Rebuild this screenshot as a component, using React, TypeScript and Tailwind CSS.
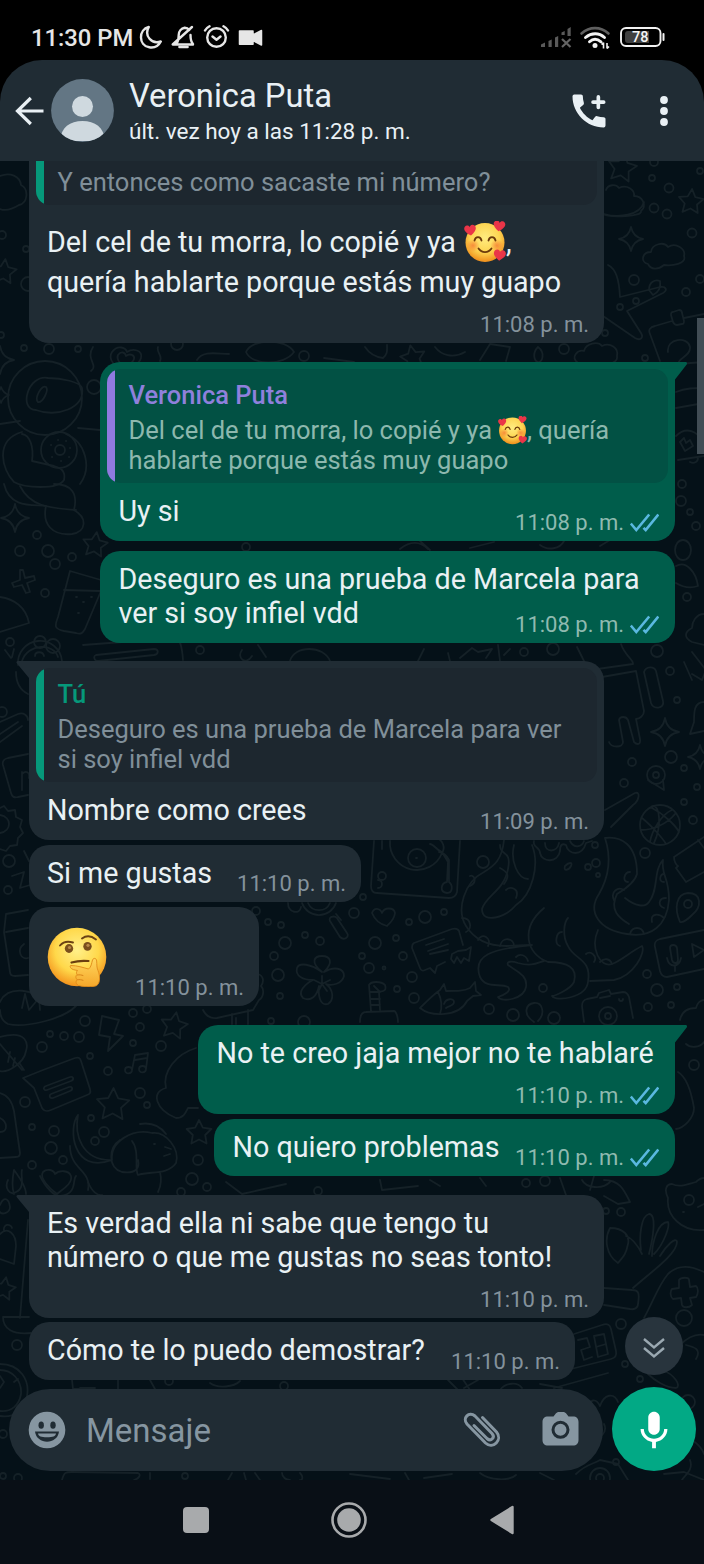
import React from 'react';
import clsx from 'clsx';
import { MdKeyboardVoice } from 'react-icons/md';

type Side = 'in' | 'out';

/* ---------- Wallpaper ---------- */

const DOTS: [number, number, number][] = [
  [654, 162, 4], [652, 178, 3], [700, 171, 3], [669, 188, 4.5], [654, 208, 4.5], [667, 214, 4.5], [692, 233, 4.5],
  [634, 280, 5], [686, 292, 4], [636, 301, 3], [620, 307, 3], [700, 279, 4], [605, 333, 3], [564, 349, 5], [645, 358, 3],
  [2, 235, 4], [26, 249, 3], [28, 284, 7], [1, 335, 3], [24, 348, 3], [49, 349, 5], [78, 349, 3], [177, 344, 6],
  [304, 356, 5], [94, 387, 7], [682, 484, 4], [681, 501, 5], [690, 512, 3], [696, 526, 4], [687, 597, 4], [524, 652, 4],
  [553, 649, 6], [657, 651, 6], [670, 671, 4], [677, 700, 3], [671, 757, 6], [632, 762, 4], [684, 768, 3], [656, 775, 9],
  [656, 775, 3], [37, 535, 4], [20, 551, 5], [48, 551, 6], [55, 564, 5], [72, 557, 4], [45, 593, 4], [10, 642, 4],
  [2, 712, 5], [246, 547, 4], [200, 650, 4], [53, 646, 7], [9, 861, 6], [8, 890, 4], [256, 911, 4], [268, 922, 3],
  [281, 925, 3], [285, 943, 6], [305, 935, 3], [320, 941, 4], [274, 956, 4], [278, 975, 6], [280, 996, 3], [85, 1021, 5],
  [133, 1013, 4], [147, 1009, 4], [140, 1027, 4], [50, 1034, 3], [64, 1036, 4], [79, 1037, 5], [42, 1047, 5],
  [133, 1043, 3], [161, 1046, 5], [90, 1056, 3], [108, 1071, 4], [140, 1093, 5], [147, 1105, 3], [25, 1102, 5],
  [91, 1118, 3], [104, 1132, 5], [32, 1127, 3], [54, 1131, 5], [95, 1141, 4], [51, 1148, 6], [63, 1160, 4],
  [32, 1165, 4], [198, 1160, 5], [192, 1179, 6], [304, 1022, 6], [271, 1021, 3], [483, 862, 6], [382, 876, 4],
  [363, 897, 3], [354, 913, 5], [425, 917, 6], [444, 912, 3], [409, 922, 3], [375, 943, 6], [396, 938, 3],
  [403, 956, 4], [362, 956, 3], [369, 968, 5], [384, 968, 1.5], [412, 977, 5], [397, 989, 3], [414, 998, 5],
  [489, 1009, 5], [513, 1015, 6], [554, 1018, 6], [543, 988, 4], [645, 853, 5], [647, 974, 4], [657, 990, 6],
  [677, 987, 3], [648, 1007, 4], [671, 1005, 3], [694, 1065, 5], [596, 863, 4], [588, 867, 3], [595, 845, 3],
  [598, 875, 2], [684, 802, 3], [693, 820, 4], [624, 783, 4], [697, 787, 3], [526, 1183, 4], [545, 1181, 5],
  [181, 1192, 4], [207, 1187, 4], [318, 1191, 4], [606, 1211, 3], [621, 1212, 4], [17, 1345, 5], [621, 1324, 5],
  [625, 1364, 3], [640, 1379, 3], [684, 1318, 8], [3, 1434, 4], [3, 1476, 3], [18, 1478, 4], [185, 1476, 3],
  [284, 1386, 4], [169, 1381, 4], [688, 1402, 7], [616, 1462, 3], [600, 1478, 10], [600, 1478, 4],
];

const STARS: [number, number, number, number][] = [
  [622, 168, 15, 10], [691, 202, 13, 5], [413, 358, 13, -12], [95, 545, 13, 8], [174, 1026, 14, 10],
  [113, 1105, 17, 2], [199, 1133, 13, 0], [4, 272, 13, 6], [4, 1289, 12, 10],
];

const SPARKS: [number, number, number][] = [
  [631, 239, 12], [15, 518, 14], [665, 732, 14], [0, 360, 14], [700, 757, 12], [1, 395, 8],
];

const DOODLES: string[] = [
  // clouds
  'M0 176c10-4 20 0 21 9 8 4 7 18-2 20-8 5-14 6-19 4',
  'M606 190c2-6 10-6 13-2 8-4 16 2 15 8 9 0 13 10 7 15 2 6-30 6-36 4',
  'M648 264c-8-2-6-12 3-12 1-8 13-11 17-5 8-5 18 2 16 9 3 8-12 10-20 9-6 5-13 5-16-1z',
  'M578 363c-8-6 0-14 6-12 2-8 14-10 18-5 8-4 17 2 15 10 1 5-5 8-8 7',
  'M604 214c14 4 36 2 40-12',
  // bird and drop near the calendar
  'M608 265c8 4 11 14 12 32l40-10c6-1 8 3 3 6l-36 18 14 22c3 5-1 8-6 5l-32-22',
  'M649 290c0-8 6-11 11-9 1 6-1 11-7 14z M538 347c8 6 4 16 0 15-4-1-6-9 0-15z',
  // calendar page
  'M672 321l-17 5c-5 1-7 4-5 8l10 27 M704 314l-20 4 M673 312l6-2c2 0 3 1 3 3l2 8c0 2 0 3-2 3l-5 1c-2 0-3-1-4-3l-2-7c0-2 0-3 2-3z',
  'M668 352c-2-14 20-16 22-5 1 9-12 11-12 17l26-2',
  // spaceman
  'M8 398a37 37 0 1 0 74 0a37 37 0 1 0-74 0z M36 410c-18 0-8-36 12-32 14 0 32 4 34 10 4 20-26 30-46 22z',
  'M38 402c-4-4 4-18 8-15 3 3-3 16-8 15z',
  'M41 450a18 18 0 1 0 36 0a18 18 0 1 0-36 0z M55 450a5 5 0 1 0 10 0a5 5 0 1 0-10 0z',
  'M51 445h.1M58 440h.1M66 441h.1M70 448h.1M69 457h.1M61 461h.1M52 457h.1',
  'M22 432C-6 440 2 470 14 482c10 6 44 8 50-2 2-10-4-12-10-14l-22-5c2-14-2-26-10-27',
  'M0 424l20-3 M78 428l22 2 M66 434c20 8 26 34 14 50 M20 486c10 20 28 22 56 24',
  'M4 484c6 26 32 20 42 22-4 18 6 30 26 28 14-2 16-16 2-24 4-16-2-26-20-26',
  // planet, hearts
  'M93 347c-8 12 6 18-2 24 M112 352c6-8 14-4 15 0 6-4 16-2 14 6-2 8-12 10-16 14-10-6-18-12-13-20z M118 355c3-4 7-3 8 1 4-3 9-1 8 3-1 4-6 6-9 8-5-3-9-8-7-12z',
  'M246 352c6-14 40-14 48 0-10 14-42 14-48 0z M158 347c-2 6 5 8 2 14 M197 360c6-10 20-6 32-6',
  'M365 347c4 6 10 10 18 11 5-4 4-8 4-13 M435 347c6 8 18 12 30 5 M480 360l10-16 20 3-4 14 M324 358l30 4',
  // left column
  'M70 571l-12 46c-4 10-3 12 6 14l12 2c6 2 7-1 9-4l16-38 M64 590l36 1 M70 571l31 9 M0 597c14 2 26 10 29 26l-29 9',
  'M76 597h1M91 597h1M83 602h1M78 613h1',
  'M18 665a22 22 0 1 1 44-4 M22 661c6-18 32-18 36-4 M34 642a6 6 0 1 0 12 0a6 6 0 1 0-12 0z M35 656c0-5 8-5 9 0 M16 672c0 10 4 18 12 22',
  'M83 645l92-7c5 0 7 8 8 22 M96 655l58-6c5 0 5 5 0 6l-56 6c-4 0-5-5-2-6z M242 650c-6 8 4 16 10 6 M290 661c4-16 34-16 40 0 M258 645l8 12 M18 722l-18 12 M22 726l-22 16 M0 722l18-8c6-2 10 2 10 6',
  'M28 754l-20 4c-4 1-6 3-5 7l8 28c1 4 3 5 7 4l10-2 M22 772v18 M22 774c4-4 8-2 7 4',
  'M0 808l4-2 4 5 7-1 1 7 6 3-2 7 3 6-5 5-1 7-7 1-4 5-6-2 M0 815c12 2 12 16 0 18',
  // carton, croissant, leaf
  'M28 910l-22 4-2 18 6 40c0 3 2 4 5 4l13-1 M6 932l22-4 M24 944c-8 6-3 16 4 14 M24 851l5 10 M12 876l12-4-4 16 10-3',
  'M0 1002c8-18 36-12 46 0 14 4 24 0 30 4-14 14-52 22-68 18-6-3-8-8-8-14 M22 1008l3-14 4 16 10-12 1 12',
  'M0 1037c28-8 28 8 26 14-2 12-18 22-26 20 M0 1044l22 26 M8 1062l2-10 M15 1058l-2 8 M20 1064l4 6',
  'M23 1078l20-8 32-12c4-1 5 0 6 3l9 28c1 4 0 5-3 6l-36 15c-5 2-7 1-9-2l-8-20z M46 1086l24-9c4-1 4 3 1 4l-24 9c-4 1-4-3-1-4z M51 1094l18-7c4-1 4 3 1 4l-17 7c-4 1-4-3-2-4z',
  'M0 1093c8 2 12 8 14 18l6 42c0 3-2 4-4 4l-16 1 M0 1118c8 4 8 14 0 14',
  // bolt, notes
  'M102 1016l17 4-5 14 9 2-15 15 2-14-11-2z M135 1055l13-2-2 16 M135 1055l-3 15 M135 1060l12-2 M125 1070c0-4 7-4 7 0s-7 5-7 0z M139 1069c0-4 7-4 7 0s-7 5-7 0z',
  // puppy, heart
  'M78 1115c-10 12-6 60 34 45 M78 1115c-4 20 4 46 34 45 M88 1190c4-20-18-20-18-44 M112 1160c-2-18 20-32 40-27 14-2 28 16 24 30-8 12-26 8-38 12-4-6 2-24-6-34 M120 1140c-12 8-12 28 2 32 14 2 18-4 16-12 M154 1144h1 M165 1147l6 2 M164 1156l6-2 M160 1172c2 8 0 16-2 20 M140 1124c12-2 20 2 26 10',
  'M43 1172c4-4 11-2 12 2 4-4 14-4 16 2 2 8-10 14-14 18-8-6-18-16-14-22z M14 1170c6 8 12 18 12 24 M14 1170c-2 10-2 18 0 24',
  'M196 1048c-20 6-34 24-30 40-16 4-10 22 10 30 8 0 10-6 12-10l10 0',
  // hibiscus, magnifier
  'M322 972c-12-10-8-16 0-16 8 0 12 6 2 16 10-6 20-4 20 4-2 8-12 10-18 8 8 6 8 16 2 20-8 2-10-8-9-18-2 10-8 16-16 12-6-6 2-14 10-18-10 0-18-4-16-12 2-6 14-4 25 4z M322 984l-8-4 M322 984l8-4 M322 984l-4 8 M322 984l5 7 M322 984v-8',
  'M302 903a18 18 0 0 0 34 0 M308 903a12 12 0 0 0 22 0 M336 914l5 6 M330 921l10 16c4 4 10 0 7-4l-10-15c-3-3-9-1-7 3z M288 903c0 10 12 12 13 4',
  'M258 974c6 2 6 8 3 12 4 4 2 12-2 14l-6 10-36 8c-8 1-12-4-14-8 M232 1014v10 M248 1010v14 M236 1018v6',
  // turntable
  'M374 841l-3 45c0 4 2 7 6 7l72 5c5 0 7-2 8-6l3-51 M390 841a27 27 0 0 0 52 12c4-6 0-12-3-14 M408 858a9 9 0 1 0 18 0a9 9 0 1 0-18 0z M416 858h1 M430 844c4 0 6 6 12 8l6 10-1 20c-6 1-8 10 0 11 6 0 6-8 2-11v-22c-2-4-6-8-10-8 M378 888a4 4 0 1 0 0-8 M382 841v8',
  'M372 913c2-6 8-5 10 0 2-6 12-6 13 0-1 8-6 10-8 13-8-2-13-8-15-13z',
  'M414 943l38-14c4-1 6 0 7 2l4 14 M414 943c-2 1-2 3-2 5l8 20c1 3 3 3 5 2l5-2 5 5 2-7 8-4 M426 945l18-6 M428 951l20-7 M430 954l18-4 M452 954l6-3 8-1 5-3-2 14-5-3-3 5-4-6-3 6-3-4z',
  // octopus
  'M504 840c-2 20-10 26-20 32-20 10-28 38-18 54 10 16 26 20 40 20l24-1',
  'M532 845c8 20 0 50-16 60-10 12-34 20-34 4 4-14 22-18 26-40 4-20-8-12-8-24 M514 845c-4 16 4 34 14 34',
  'M544 908c-24 20-18 46 4 54 20 0 30 6 26 20-4 8-20 14-22 14 4 6 34 2 36-14 4-24-14-22-20-36-6-10-4-24 0-28',
  'M532 945c-40 4-60 10-52 32 6 12 20 6 28 10 4 4-4 8-10 10 4 6 26 2 28-10 2-12-10-16-18-22-2-4 4-4 10-2 16 4 20-1 26-2',
  'M605 838c16-2 32 6 32 36-2 8-10 14-20 20-8 16 2 24 12 30 M605 838c8 24 2 42-6 56-12 18 0 36 28 40 24 4 40-8 42-34 0-24-8-24-6-40-10 10-4 30-14 42-4 6-14 4-24-4',
  'M598 930c-8 18 2 38 14 34 10-4 18-12 30-18 4 6-8 30-28 34l-24 1 M605 810l30-17c6-2 4 8-2 12l-22 22',
  'M470 886c8-4 4-12 0-10 M462 918c10 0 10 12 4 14 M478 940c4-8 14-2 10 6 M500 946c2-10 14-8 14 0 M506 890c4-4 14-2 10 8 M500 868c8 4 10 8 4 16 M560 946c-6-2-4-14 2-14 M594 962c4-6-4-12-8-8 M516 957c4-4 10-2 12 4 M630 934c2-8 12-8 14 0 M652 922c-2-10 8-8 12-4 M664 908c-6-2-6-10 2-10 M664 882c-6 0-4-8 0-8 M628 882c-6 0-4-10 2-10 M614 900c-4-8 4-14 10-10 M600 962c4-4 10-4 12 2',
  // goggles
  'M534 841c-2 6 6 6 6 12 2 10 18 10 20-2 0-6 2-8 6-6 2 10 16 12 20-2l6-2 M545 843c0 10 12 10 14 0 M570 841c4 8 12 6 14 0 M565 866c4-4 8-4 6 0-2 4-8 6-6 0z',
  // basketball
  'M640 825a20 20 0 1 0 40 0a20 20 0 1 0-40 0z M642 818c10 8 22 22 24 26 M652 808c12 6 24 18 27 24 M650 842c2-12 12-28 22-32 M641 830c12 0 26-6 34-16 M652 806c8-2 10 20 2 37',
  'M704 837l-30 20c0 4 2 8 4 9l-2 2 10 14 18-10 M698 840l6 8 M648 780l16 10-1-10',
  // pin, voice card
  'M680 922c-6-14-4-28 8-29 14 0 14 14 4 22-4 4-8 8-12 7z M684 904a4 4 0 1 0 8 0a4 4 0 1 0-8 0z',
  'M704 930l-44 9c-4 1-6 4-5 8l5 24c1 4 3 6 7 6l37-8 M670 948c0-4 6-4 7 0l1 12c0 4-5 4-6 0z M667 958c2 10 12 10 14 0 M675 966v5 M692 944l12 6-10 7z',
  // fish, candle
  'M420 1008c8-8 14-14 20-18l4-6 2 7c12 0 18 0 24-3l5-6 1 9 5 4-8 1-6 5c-8 16-36 16-47 7z M438 992c4 8 4 16 2 22 M444 1004c2-6 10-6 10-2s-6 4-8 6',
  'M369 985c2-4 12-4 16 0 2 6-2 6-6 7l1 18 M369 985l2 26 M370 992h10 M370 999h10 M371 1005h9 M360 1022c0-6 2-10 6-10l28-1c2 0 4 6 4 11 M374 986l6 6',
  'M534 1022c-12-8-8-18 0-19 8-1 12 10 4 18',
  // camera
  'M584 1022l-2-16c0-4 1-6 5-7l10-2 2-4 10-3 2 4 12-2c4 0 5 2 6 5l4 21 M599 1016a9 9 0 1 1 18 0a9 9 0 1 1-18 0 M605 1016a3 3 0 1 0 6 0a3 3 0 1 0-6 0z M600 998l10-2 M619 999a2 2 0 1 0 4 0',
  'M680 1020c2-10 10-12 16-12 2-8 8-8 8-8 M678 1072c10 6 14 24 16 36 0 10-10 20-18 21 M686 1044c4 4 14 4 18-2',
  // robot and cart
  'M577 647l6 12c2 3 2 4 0 12l50-7c1-4-8-8-12-20 M602 677l34-6 8 40c0 4-4 8-8 8l4 20c1 6-3 6-6 3l-6-22c-2-4-8-4-9 0l4 22c0 6-12 6-14 0 M644 672c2-6 10-6 12-1l7 30c2 8-10 9-12 2z',
  'M675 550a8 10 0 1 0 16 0a8 10 0 1 0-16 0z M676 566c10-6 20 6 22 20-6 2-14 2-22-3 M704 614c-8 0-12 8-12 14-8 4-8 10 0 14l12 3 M692 652l14 18-4 10-10-6 M684 662l8 18 M704 702c-10 0-10 10-10 20l-4 12 14-3',
  'M676 392c10-4 18-4 28-4 M676 408l28-5 M676 436c12-12 28-2 28 14 M680 442l4-4 2 5 4-3 3 6-8 5z M678 460l26-4 M690 462c4 2 8 0 8-4',
  // between the rows
  'M424 649l-6 12 M448 653l2 8 M460 658l12-10 6 4 14-3-6 9 M498 645l2 16 M510 649l-6 6 M5 650l6 8 M14 649l-2 8',
  'M420 541l10 9 M400 549c10-8 20-8 28 0 M540 545c8 6 20 4 24-4 M470 548l24-6 M600 546l10-6',
  'M380 1180l2 10 36-4 M430 1180l10 6 M480 1178l6 8 M560 1178l6 17 M582 1180c4 8 20 10 28 2 M590 1190l4-14 M604 1180c16 0 20 10 26 22 l-12 2-14-8',
  'M226 1182l16 12 44-10 M88 1182c4 10 10 14 14 13 M40 1176c6 12 14 20 20 20 18-2 12-16 16-20 M0 1205c4-10 9-6 10 2 0 6-8 8-10 5 M8 1180c-4 8 2 16 8 12 10-4 4-18 6-22',
  // bear, hand with petals
  'M668 1198c-4-8-2-14 4-14 8 4 16 0 24-2 4-4 8-4 8-4 M668 1198c-2 18 14 34 36 32 M684 1200a5 5 0 1 0 10 0a5 5 0 1 0-10 0z M698 1207l6-3 M683 1212h1',
  'M610 1228c14 0 20 8 18 16-2 10-4 12-10 19-12-8-14-24-8-35z M641 1250c-2-14 0-34 8-36 8 0 4 24 0 40 M652 1256c0-14 6-34 16-34 2 4-4 22-14 32 M660 1256c6-10 16-20 17-14 0 12-26 30-44 46 M604 1288l28 2c6 0 8 2 6 14 0 4-4 6-8 5l-26-4 M626 1236c6 2 12 10 16 18',
  // gamepad
  'M644 1318c10-18 14-32 24-44 10-10 24-8 36-2 M672 1289l7-1 0-8c2-3 10-3 10 0l1 7 6-1c3 2 2 9 0 11l-6 1 2 7c-3 3-9 3-10 0l-1-7-8 1c-3-2-3-8-1-10z M680 1345c6-6 14-12 24-10 M686 1345c8 2 16 4 10 14 M662 1370c12 4 20 16 14 18-10 0-22-8-28-14',
  // date counter
  'M574 1334l28-9c6-2 8 0 9 4l5 22c1 5-1 7-5 8l-40 10 M578 1340l9-2 3 9-9 3 3 10 8-3 M594 1336l10-2 4 20-10 3z M596 1347l10-3 M554 1388l54-15',
  // left bottom
  'M0 1234c8-8 16 0 16 12l-2 18-14-5 M4 1230a4 4 0 1 1 8-2 M28 1220l-8 98 M3 1317h26 M3 1317c0 12 10 18 28 16',
  'M0 1364c20 0 30 16 27 32-2 16-14 22-27 20 M0 1370c12 0 22 10 21 24-2 12-10 18-21 17 M0 1376l4 6-4 6 M14 1382l4-3',
  'M72 1380l1 9 22-1 M80 1388h14 M118 1380v9 M150 1380l5 9 M210 1383c8 6 24 4 30-2 M448 1380l10 10 M470 1390l-8-12 M478 1380l-14 8 M500 1390c6-8 18-8 22-2 M540 1384l22 4',
  'M62 1480c2-8 4-8 10-8l66 1c4 2 0 6-4 7 M150 1473v6 M232 1473l-4 7 M244 1473l2 7 M255 1473l5 7 M282 1473c0 4 4 7 8 7 M300 1473c4 4 2 8 0 7 M350 1474l40 5 M405 1473l4 7 M424 1478l28-4 M480 1473c10 8 30 8 36 2 M540 1473l14 7',
  'M586 1410c4-12 10-12 14-4 4-12 14-14 18-4 M590 1440c10 0 18-8 14-16 M576 1474c10-10 18-10 24-14 l18 4 10 16 M690 1460c4 10-6 16-8 20 M664 1474l20-2 20 8 M692 1440c6 4 10 8 12 14',
];

function starPoints(cx: number, cy: number, r: number, tilt: number) {
  return Array.from({ length: 10 }, (_, i) => {
    const a = ((i * 36 - 90 + tilt) * Math.PI) / 180;
    const d = i % 2 ? r * 0.5 : r;
    return `${(cx + d * Math.cos(a)).toFixed(1)},${(cy + d * Math.sin(a)).toFixed(1)}`;
  }).join(' ');
}

function Wallpaper() {
  return (
    <svg
      className="absolute inset-0 h-full w-full"
      viewBox="0 161 704 1319"
      fill="none"
      stroke="#152127"
      strokeWidth="1.8"
      strokeLinecap="round"
      strokeLinejoin="round"
      aria-hidden="true"
    >
      {DOODLES.map((d) => (
        <path key={d} d={d} />
      ))}
      {DOTS.map(([x, y, r], i) => (
        <circle key={i} cx={x} cy={y} r={r} />
      ))}
      {STARS.map(([x, y, r, tilt], i) => (
        <polygon key={i} points={starPoints(x, y, r, tilt)} />
      ))}
      {SPARKS.map(([x, y, r], i) => (
        <path
          key={i}
          d={`M${x} ${y - r}q2 ${r - 2} ${r} ${r}q${2 - r} 2 ${-r} ${r}q-2 ${2 - r} ${-r} ${-r}q${r - 2} -2 ${r} ${-r}z`}
        />
      ))}
      <path d="M20 570l3 0 2 8 9-2 1 4-8 3 3 9-4 1-4-8-8 2-2-4 8-3z" />
    </svg>
  );
}

/* ---------- Emoji ---------- */

const HEART = 'M0 3.2C-3.6.6-5.2-1.2-5.2-3.2c0-2 1.5-3 2.8-3C-1.2-6.2-.3-5.4 0-4.4c.3-1 1.2-1.8 2.4-1.8 1.3 0 2.8 1 2.8 3C5.2-1.2 3.6.6 0 3.2z';

function HeartsFace({ className }: { className?: string }) {
  return (
    <svg viewBox="0 0 42 42" className={className} role="img" aria-label="🥰">
      <defs>
        <radialGradient id="hf-skin" cx="50%" cy="38%" r="60%">
          <stop offset="0" stopColor="#ffec80" />
          <stop offset="0.62" stopColor="#fdd552" />
          <stop offset="1" stopColor="#f0931f" />
        </radialGradient>
        <radialGradient id="hf-blush">
          <stop offset="0" stopColor="#f57a33" stopOpacity="0.8" />
          <stop offset="1" stopColor="#f57a33" stopOpacity="0" />
        </radialGradient>
      </defs>
      <circle cx="21" cy="21.5" r="19.5" fill="url(#hf-skin)" />
      <circle cx="9" cy="24.5" r="6.5" fill="url(#hf-blush)" />
      <circle cx="33" cy="24.5" r="6.5" fill="url(#hf-blush)" />
      <path
        d="M10.5 19.5c1-4.5 6-4.5 7 0M24.5 19.5c1-4.5 6-4.5 7 0M14.5 27.5c3.2 4.7 9.8 4.7 13 0"
        fill="none"
        stroke="#6b3a0c"
        strokeWidth="1.8"
        strokeLinecap="round"
      />
      <path d={HEART} fill="#ea3548" transform="translate(6.5 11) rotate(-8) scale(1.12)" />
      <path d={HEART} fill="#ea3548" transform="translate(35 6.8) rotate(8) scale(1.12)" />
      <path d={HEART} fill="#ea3548" transform="translate(35.5 36) rotate(6) scale(1.15)" />
    </svg>
  );
}

function ThinkingFace({ className }: { className?: string }) {
  return (
    <svg viewBox="0 0 60 60" className={className} role="img" aria-label="🤔">
      <defs>
        <radialGradient id="tf-skin" cx="50%" cy="38%" r="62%">
          <stop offset="0" stopColor="#fff08a" />
          <stop offset="0.6" stopColor="#ffd84a" />
          <stop offset="1" stopColor="#f3921c" />
        </radialGradient>
        <linearGradient id="tf-hand" x1="0" y1="0" x2="0" y2="1">
          <stop offset="0" stopColor="#ffd75e" />
          <stop offset="1" stopColor="#f5a72a" />
        </linearGradient>
      </defs>
      <circle cx="30" cy="30" r="29.3" fill="url(#tf-skin)" />
      <ellipse cx="22" cy="21.5" rx="4.2" ry="4.4" fill="#7a4f1c" />
      <ellipse cx="40.5" cy="19.3" rx="4.2" ry="4.4" fill="#7a4f1c" />
      <circle cx="22.5" cy="20.5" r="1.6" fill="#b98a4a" />
      <circle cx="41" cy="18.3" r="1.6" fill="#b98a4a" />
      <path d="M13 18.5c3-3.5 8-4.5 13-3M35 11.5c4-3 9-3 14 1" fill="none" stroke="#6b4214" strokeWidth="1.9" strokeLinecap="round" />
      <path d="M24.5 35.5c5-1.5 11-2 17-1.5" fill="none" stroke="#6b3f10" strokeWidth="2.2" strokeLinecap="round" />
      <path
        d="M24 38.5c6 0 12 2 17.5 3.5 3-2 3-6 4-9 1-2.5 4-2 4.2 1 .3 4-.2 6 1.3 9.5 2.5 6 2.5 15-3.5 15.8-5 .7-12 .5-16-.8-4-2.500-2-5-1.5-6-2-2-1-4 0-5-1-1.5-.5-3 .5-4-3-.5-6-1-7-3-.5-1.500-.5-2 .5-2z"
        fill="url(#tf-hand)"
        stroke="#e08a18"
        strokeWidth="0.9"
      />
      <path d="M30.5 48c2-.5 4 0 5.5.5M30.5 52.8c2-.5 4 0 5.5.5" fill="none" stroke="#d98518" strokeWidth="1" strokeLinecap="round" />
    </svg>
  );
}

/* ---------- Status bar ---------- */

function StatusBar() {
  return (
    <div className="flex h-[60px] items-center bg-black pl-[31px] pr-[38px] pt-[15px] text-[#e6e6e6]">
      <span className="w-[103px] whitespace-nowrap text-[23.8px] font-medium leading-7">11:30 PM</span>
      <svg
        className="-mt-[2px] ml-[4px] h-6 w-[126px]"
        viewBox="138 25 126 24"
        fill="none"
        stroke="currentColor"
        strokeWidth="2.4"
        strokeLinecap="round"
        strokeLinejoin="round"
      >
        {/* moon */}
        <path d="M148.8 27c-10.5 2.5-10.5 18.5.5 20.3 5 .8 9.2-1.3 11.5-5.8-9 3.2-17-5.5-12-14.5z" />
        {/* muted bell */}
        <path d="M174 44.5h19M176.5 43.5c2-2 2-4.5 2.2-8.5 0-3.5 2.5-6.5 6-7.2 2 .2 3.5 1 4.5 2.2M190.5 35c0 4.5.5 7 2.5 9M192 27l-19.3 17.5" />
        <path d="M179.5 47h8" strokeWidth="2.6" />
        {/* alarm */}
        <circle cx="216.5" cy="37.5" r="9.3" />
        <path d="M212.5 36.5l4 3.2 4-3.2M205 30.5c1-2 2.5-3.2 4.5-4.2M228 30.5c-1-2-2.5-3.2-4.5-4.2" />
        {/* video camera */}
        <path d="M239.500 31h13.5v3.8l8.5-4.3v14.5l-8.5-4.3v3.6h-13.5z" fill="currentColor" strokeWidth="1.5" />
      </svg>
      <svg className="-mt-[1px] ml-auto h-6 w-[126px]" viewBox="540 25 126 24" fill="none">
        <path
          d="M541 47v-2.5l4-2V47zM548.5 47v-6l3.2-1.5V47zM555 47V37.5l3.2-1.5V47zM561.5 35v-2.5l3.2-1.5v4zM567.5 36v-7l3.2-2v9z"
          fill="#5a5a5a"
        />
        <path d="M562 39l8.5 8M570.5 39l-8.5 8" stroke="#646464" strokeWidth="2.2" />
        <path d="M581.5 33.5c8-7.2 19-7.2 27 0" stroke="#5f5f5f" strokeWidth="2.6" strokeLinecap="round" />
        <path d="M585.5 37.5c6-5 13.5-5 19 0M589.5 41.8c3.5-3.2 7.5-3.2 11.5 0" stroke="#f2f2f2" strokeWidth="2.9" strokeLinecap="round" />
        <circle cx="595" cy="45.5" r="2.5" fill="#f2f2f2" />
        <path d="M603.5 42.5v6M607 43v5.5M603.5 42.5l-2 2M607 48.5l2-2" stroke="#f2f2f2" strokeWidth="1.6" />
        <rect x="621" y="28" width="39.5" height="18" rx="5" stroke="#f2f2f2" strokeWidth="1.9" />
        <path d="M625 34a3 3 0 0 1 3-3h21v12h-21a3 3 0 0 1-3-3z" fill="#3f3f3f" />
        <path d="M663.5 34v6" stroke="#f2f2f2" strokeWidth="2" strokeLinecap="round" />
        <text x="640.2" y="42.3" textAnchor="middle" fill="#f5f5f5" fontSize="14.5" fontWeight="500">78</text>
      </svg>
    </div>
  );
}

/* ---------- Header ---------- */

function ChatHeader() {
  return (
    <header className="flex h-[101px] items-center rounded-t-[42px] bg-[#202c34] pl-[14px] text-[#e9f0f4]">
      <svg className="h-[30px] w-[31px]" viewBox="0 0 31 30" fill="none" stroke="currentColor" strokeWidth="3.2" aria-label="Atrás">
        <path d="M29.5 15H4M16.8 2 3.5 15l13.3 13" />
      </svg>
      <svg className="ml-[6px] size-[63px]" viewBox="0 0 63 63">
        <defs>
          <clipPath id="avatar">
            <circle cx="31.5" cy="31.5" r="31.4" />
          </clipPath>
        </defs>
        <g clipPath="url(#avatar)">
          <path d="M0 0h63v63H0z" fill="#637684" />
          <circle cx="31.5" cy="27.5" r="10.5" fill="#cfd9df" />
          <path d="M9 62c1-14 10-20 22.5-20S53 48 54 62z" fill="#cfd9df" />
        </g>
      </svg>
      <div className="ml-[15px] mt-[2px] flex flex-col gap-[3px]">
        <h1 className="text-[32.7px] leading-[36px]">Veronica Puta</h1>
        <p className="text-[22.5px] leading-[28px]">últ. vez hoy a las 11:28 p. m.</p>
      </div>
      <svg className="ml-auto size-[44px]" viewBox="0 0 24 24" aria-label="Llamar">
        <path
          fill="currentColor"
          d="M20.01 15.38c-1.23 0-2.42-.2-3.53-.56-.35-.12-.74-.03-1.01.24l-1.57 1.97c-2.83-1.35-5.48-3.9-6.89-6.83l1.95-1.66c.27-.28.35-.67.24-1.02-.37-1.11-.56-2.3-.56-3.53 0-.54-.45-.99-.99-.99H4.19C3.65 3 3 3.24 3 3.99 3 13.28 10.73 21 20.01 21c.71 0 .99-.63.99-1.18v-3.45c0-.54-.45-.99-.99-.99z"
        />
        <path d="M17.1 4.3v5.8M14.2 7.2H20" stroke="currentColor" strokeWidth="2" strokeLinecap="round" />
      </svg>
      <svg className="ml-[45px] mr-[32px] h-[32px] w-[16px]" viewBox="0 0 16 32" fill="currentColor" aria-label="Más">
        <circle cx="8" cy="5" r="3.9" />
        <circle cx="8" cy="16" r="3.9" />
        <circle cx="8" cy="27" r="3.9" />
      </svg>
    </header>
  );
}

/* ---------- Messages ---------- */

function ReadTicks() {
  return (
    <svg className="ml-[6px] h-[20px] w-[29px]" viewBox="0 0 29 20" fill="none" stroke="#5ab8e0" strokeWidth="2.6">
      <path d="M.8 10.5 6.3 17 19.2 1.5M13.5 14.8l2.2 2.2L28.3 1.5" />
    </svg>
  );
}

function Tail({ side }: { side: Side }) {
  return side === 'in' ? (
    <svg className="absolute -left-[13px] top-0 h-[19px] w-[14px]" viewBox="0 0 14 19" fill="#202c34">
      <path d="M14 0H2C.3 0 0 1.5 1 2.6L13 17v2h1z" />
    </svg>
  ) : (
    <svg className="absolute -right-[12px] top-0 h-[20px] w-[13px]" viewBox="0 0 13 20" fill="#005d4b">
      <path d="M0 0h11.5c1.5 0 2 1.5 1 2.8L1 17.5V20H0z" />
    </svg>
  );
}

interface QuoteProps {
  side: Side;
  title?: string;
  clipped?: boolean;
  children: React.ReactNode;
}

function Quote({ side, title, clipped, children }: QuoteProps) {
  return (
    <div
      className={clsx(
        'mx-[7px] flex overflow-hidden',
        side === 'in' ? 'bg-[#1d272f] text-[#808f99]' : 'bg-[#025144] text-[#8db8ae]',
        clipped ? 'h-[44px] rounded-b-[14px]' : 'mt-[7px] h-[114px] rounded-[14px]'
      )}
    >
      <div className={clsx('w-[8px] shrink-0', side === 'in' ? 'bg-[#06987a]' : 'bg-[#8f7ae0]')} />
      <div className={clsx('whitespace-nowrap pl-[13.5px] text-[25.5px] leading-[30px]', clipped ? 'pt-[6px]' : 'pt-[11px]')}>
        {title && (
          <div className={clsx('mb-[5px] font-medium', side === 'in' ? 'text-[#06987a]' : 'text-[#8f80dc]')}>{title}</div>
        )}
        {children}
      </div>
    </div>
  );
}

interface BubbleProps {
  side: Side;
  time: string;
  className: string;
  tail?: boolean;
  quote?: React.ReactNode;
  children: React.ReactNode;
}

function Bubble({ side, time, className, tail, quote, children }: BubbleProps) {
  return (
    <div
      className={clsx(
        'relative flex shrink-0 flex-col rounded-[20px]',
        side === 'in' ? 'ml-[29px] self-start bg-[#202c34]' : 'mr-[29px] self-end bg-[#005d4b]',
        tail && (side === 'in' ? 'rounded-tl-none' : 'rounded-tr-none'),
        className
      )}
    >
      {tail && <Tail side={side} />}
      {quote}
      {/* text and time share one grid cell so the time can sit beside the last line */}
      <div className={clsx('grid flex-1 pb-[6px]', side === 'in' ? 'pl-[18px] pr-[15px]' : 'pl-[18.5px] pr-[16px]')}>
        <div className="col-start-1 row-start-1 whitespace-nowrap pt-[10.5px] text-[28.7px] leading-[34px] text-[#e9f1f4]">
          {children}
        </div>
        <div
          className={clsx(
            'col-start-1 row-start-1 flex items-center self-end justify-self-end text-[22px] leading-6',
            side === 'in' ? 'text-[#84929c]' : 'text-[#8fbab0]'
          )}
        >
          {time}
          {side === 'out' && <ReadTicks />}
        </div>
      </div>
    </div>
  );
}

function Messages() {
  return (
    <div className="relative flex flex-col">
      <Bubble
        side="in"
        time="11:08 p. m."
        className="h-[182px] w-[575px] rounded-t-none"
        quote={
          <Quote side="in" clipped>
            Y entonces como sacaste mi número?
          </Quote>
        }
      >
        <div className="mt-[5.5px] flex h-[41px] items-center">
          Del cel de tu morra, lo copié y ya
          <HeartsFace className="ml-[8px] size-[42px]" />,
        </div>
        <div className="leading-[41px]">quería hablarte porque estás muy guapo</div>
      </Bubble>

      <Bubble
        side="out"
        time="11:08 p. m."
        tail
        className="mt-[19px] h-[179px] w-[575px]"
        quote={
          <Quote side="out" title="Veronica Puta">
            <div className="flex h-[30px] items-center">
              Del cel de tu morra, lo copié y ya
              <HeartsFace className="ml-[6px] size-[29px]" />, quería
            </div>
            <div>hablarte porque estás muy guapo</div>
          </Quote>
        }
      >
        Uy si
      </Bubble>

      <Bubble side="out" time="11:08 p. m." className="mt-[10px] h-[92px] w-[575px]">
        Deseguro es una prueba de Marcela para
        <br />
        ver si soy infiel vdd
      </Bubble>

      <Bubble
        side="in"
        time="11:09 p. m."
        tail
        className="mt-[18px] h-[179px] w-[575px]"
        quote={
          <Quote side="in" title="Tú">
            Deseguro es una prueba de Marcela para ver
            <br />
            si soy infiel vdd
          </Quote>
        }
      >
        Nombre como crees
      </Bubble>

      <Bubble side="in" time="11:10 p. m." className="mt-[5px] h-[57px] w-[332px]">
        Si me gustas
      </Bubble>

      <Bubble side="in" time="11:10 p. m." className="mt-[5px] h-[99px] w-[230px]">
        <ThinkingFace className="mt-[9px] size-[60px]" />
      </Bubble>

      <Bubble side="out" time="11:10 p. m." tail className="mt-[19px] h-[89px] w-[477px]">
        No te creo jaja mejor no te hablaré
      </Bubble>

      <Bubble side="out" time="11:10 p. m." className="mt-[5px] h-[57px] w-[461px]">
        No quiero problemas
      </Bubble>

      <Bubble side="in" time="11:10 p. m." tail className="mt-[19px] h-[123px] w-[575px]">
        Es verdad ella ni sabe que tengo tu
        <br />
        número o que me gustas no seas tonto!
      </Bubble>

      <Bubble side="in" time="11:10 p. m." className="mt-[4px] h-[58px] w-[546px]">
        Cómo te lo puedo demostrar?
      </Bubble>
    </div>
  );
}

/* ---------- Composer ---------- */

function Composer() {
  return (
    <div className="relative mt-[8px] flex items-center gap-[9px] pl-[9px] pr-[8px]">
      <div className="flex h-[82px] flex-1 items-center rounded-full bg-[#202c34] pl-[19px] pr-[24px] text-[#8696a1]">
        <svg className="size-[38px]" viewBox="0 0 38 38" aria-label="Emoji">
          <circle cx="19" cy="19" r="18.3" fill="currentColor" />
          <ellipse cx="13.2" cy="14.2" rx="2.7" ry="3.6" fill="#202c34" />
          <ellipse cx="25" cy="14.2" rx="2.7" ry="3.6" fill="#202c34" />
          <path d="M7 20.5c1.5 13.5 22.5 13.5 24 0z" fill="#202c34" />
          <path d="M10 22.6h18c-.5 3-3 3.7-9 3.7s-8.5-.7-9-3.7z" fill="currentColor" />
        </svg>
        <span className="ml-[20px] mt-[2px] text-[33px] leading-[38px]">Mensaje</span>
        <svg
          className="ml-auto h-[38px] w-[40px]"
          viewBox="462 1411 40 38"
          fill="none"
          stroke="currentColor"
          strokeWidth="3"
          strokeLinecap="round"
          aria-label="Adjuntar"
        >
          <path d="M482.5 1417.5l14 14.5c6.5 7.5-3.5 18-11 11l-18.5-19c-5-6 2-13 8-8l17 17.5c3.5 4-1 8.5-5 5l-13-13" />
        </svg>
        <svg className="-mt-[2px] ml-[40px] h-[36px] w-[37px]" viewBox="0 0 37 36" aria-label="Cámara">
          <path
            fill="currentColor"
            d="M6 5.5h5.5L14 2.3C15 1.3 16 1 17 1h4c1 0 2 .3 3 1.3l2.5 3.2H31c3.5 0 5.5 2 5.5 5.5V29c0 3.5-2 5.5-5.5 5.5H6C2.5 34.5.5 32.5.5 29V11c0-3.5 2-5.5 5.5-5.5z"
          />
          <circle cx="18.5" cy="18.8" r="7.5" fill="currentColor" stroke="#202c34" strokeWidth="3" />
        </svg>
      </div>
      <button
        className="-mt-[1px] flex size-[84px] items-center justify-center rounded-full bg-[#02a985] text-white"
        aria-label="Grabar audio"
      >
        <MdKeyboardVoice className="size-[46px]" />
      </button>
    </div>
  );
}

function NavBar() {
  return (
    <nav className="flex h-[84px] items-center bg-[#090f16] pb-[4px] pl-[183px] text-[#a8aaac]">
      <div className="size-[26px] rounded-[4px] bg-current" />
      <svg className="ml-[122px] size-[36px]" viewBox="0 0 36 36">
        <circle cx="18" cy="18" r="16.5" fill="none" stroke="currentColor" strokeWidth="2.6" />
        <circle cx="18" cy="18" r="11.8" fill="currentColor" />
      </svg>
      <svg className="ml-[122px] h-[30px] w-[26px]" viewBox="0 0 26 30">
        <path d="M2.5 15 23.5 2v26z" fill="currentColor" stroke="currentColor" strokeWidth="2.4" strokeLinejoin="round" />
      </svg>
    </nav>
  );
}

export default function App() {
  return (
    <div className="h-[1564px] w-[704px] overflow-hidden bg-black font-['Roboto','Noto_Sans',sans-serif]">
      <StatusBar />
      <ChatHeader />
      <main className="relative flex h-[1319px] flex-col overflow-hidden bg-[#051118]">
        <Wallpaper />
        <Messages />
        <Composer />
        <div className="absolute right-0 top-[157px] h-[136px] w-[7px] bg-[#414d55]" />
        <button
          className="absolute right-[21px] top-[1156px] flex size-[58px] items-center justify-center rounded-full bg-[#28343d] text-[#9aa8b1]"
          aria-label="Ir al final"
        >
          <svg className="mt-[3px] h-[22px] w-[24px]" viewBox="0 0 24 22" fill="none" stroke="currentColor" strokeWidth="2.4">
            <path d="M2 2l10 8.5L22 2M2 11l10 8.5L22 11" />
          </svg>
        </button>
      </main>
      <NavBar />
    </div>
  );
}
